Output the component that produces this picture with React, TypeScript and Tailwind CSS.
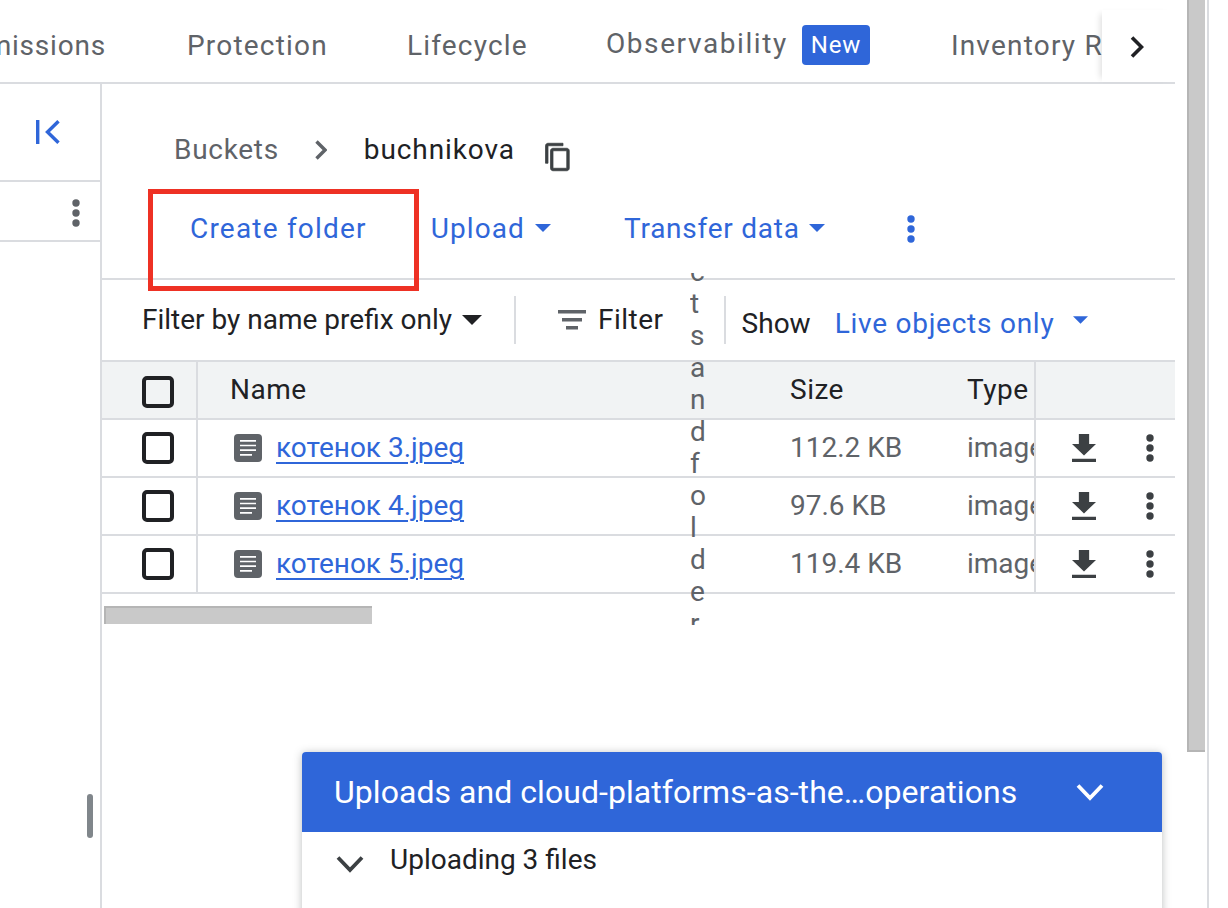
const blue = 'text-[#2f66d9]'

const Caret = ({ className }: { className: string }) => (
  <svg viewBox="0 0 10 5" className={className} fill="currentColor">
    <path d="M0 0h10L5 5z" />
  </svg>
)

const Kebab = ({ className }: { className: string }) => (
  <svg viewBox="0 0 8 28" className={className} fill="currentColor">
    <circle cx="4" cy="4" r="3.7" />
    <circle cx="4" cy="14" r="3.7" />
    <circle cx="4" cy="24" r="3.7" />
  </svg>
)

const Checkbox = () => (
  <div className="w-8 h-8 rounded-[5px] border-4 border-[#202124]" />
)

const DocIcon = () => (
  <svg viewBox="0 0 28 28" className="w-7 h-7 shrink-0">
    <rect width="28" height="28" rx="4" fill="#5f6368" />
    <path d="M6 6.800h16M6 11.500h16M6 16.200h16M6 20.900h12" stroke="#fff" strokeWidth="1.700" />
  </svg>
)

const files = [
  { name: 'котенок 3.jpeg', size: '112.2 KB' },
  { name: 'котенок 4.jpeg', size: '97.6 KB' },
  { name: 'котенок 5.jpeg', size: '119.4 KB' },
]

export default function App() {
  return (
    <div className="relative w-[1228px] h-[908px] overflow-hidden bg-white flex font-['Roboto',sans-serif] text-[#202124]">
      <div className="w-[1175px] shrink-0 flex flex-col">
        {/* tabs */}
        <div className="h-[84px] shrink-0 border-b-2 border-[#dadce0] flex items-center text-[28px] tracking-[1.2px] text-[#5f6368] whitespace-nowrap overflow-hidden">
          <div className="w-[106px] shrink-0 overflow-hidden flex justify-end pt-[10px] tracking-[0.8px]">
            <span>Permissions</span>
          </div>
          <span className="ml-[81px] pt-[10px]">Protection</span>
          <span className="ml-[79px] pt-[10px]">Lifecycle</span>
          <span className="ml-[78px] pt-[6px] tracking-[1.6px]">Observability</span>
          <span className="ml-[14px] mt-[8px] w-[68px] h-[40px] shrink-0 rounded-[4px] bg-[#2f66d9] text-white text-[24px] tracking-[0.8px] flex items-center justify-center">
            New
          </span>
          <span className="ml-[81px] pt-[10px]">Inventory Reports</span>
        </div>

        <div className="flex-1 flex min-h-0">
          {/* collapsed sidebar */}
          <div className="w-[102px] shrink-0 border-r-2 border-[#dadce0] flex flex-col">
            <div className="h-[98px] shrink-0 border-b-2 border-[#dadce0] flex justify-end pr-[40px] pt-[36px]">
              <svg viewBox="0 0 24 24" className={`w-6 h-6 ${blue}`} fill="none" stroke="currentColor" strokeWidth="3.400">
                <path d="M1.700 0v24M22.500 1.200 11.500 12l11 10.800" />
              </svg>
            </div>
            <div className="h-[60px] shrink-0 border-b-2 border-[#dadce0] flex items-center justify-end pr-[20px] pt-[4px]">
              <Kebab className="w-2 h-7 text-[#5f6368]" />
            </div>
          </div>

          {/* main */}
          <div className="flex-1 min-w-0 flex flex-col">
            <div className="h-[196px] shrink-0 border-b-2 border-[#dadce0]">
              <div className="h-[44px] mt-[44px] pl-[72px] flex items-center text-[28px] tracking-[0.7px]">
                <span className="text-[#5f6368]">Buckets</span>
                <svg viewBox="0 0 12 20" className="w-3 h-5 ml-[36px] text-[#5f6368]" fill="none" stroke="currentColor" strokeWidth="3.400">
                  <path d="M1.500 1.500 10 10l-8.500 8.500" />
                </svg>
                <span className="ml-[37px] tracking-[0.9px]">buchnikova</span>
                <svg viewBox="0 0 24 24" className="w-[30px] h-[30px] ml-[28px] mt-[14px] text-[#3c4043]" fill="currentColor" stroke="currentColor" strokeWidth="0.600">
                  <path d="M16 1H4c-1.100 0-2 .9-2 2v14h2V3h12V1zm3 4H8c-1.100 0-2 .9-2 2v14c0 1.100.9 2 2 2h11c1.100 0 2-.9 2-2V7c0-1.100-.9-2-2-2zm0 16H8V7h11v14z" />
                </svg>
              </div>
              <div className={`h-[44px] mt-[34px] flex items-center text-[28px] pt-[2px] ${blue}`}>
                <span className="ml-[88px] tracking-[1.2px]">Create folder</span>
                <span className="ml-[64px] tracking-[1.100px]">Upload</span>
                <Caret className="w-[16px] h-2 ml-[10px] -mt-[2px]" />
                <span className="ml-[73px] tracking-[0.75px]">Transfer data</span>
                <Caret className="w-[16px] h-2 ml-[9px] -mt-[2px]" />
                <Kebab className="w-2 h-8 ml-[82px]" />
              </div>
            </div>

            {/* filter row */}
            <div className="h-[80px] shrink-0 flex items-center text-[28px]">
              <span className="ml-[40px]">Filter by name prefix only</span>
              <Caret className="w-5 h-[10px] ml-[10px]" />
              <div className="w-[2px] h-12 ml-[32px] bg-[#dadce0]" />
              <svg viewBox="0 0 28 20" className="w-7 h-5 ml-[42px] text-[#5f6368]" fill="currentColor">
                <path d="M0 0h28v3.500H0zM4 8h20v3.500H4zM8 16h12v3.500H8z" />
              </svg>
              <span className="ml-[12px] tracking-[0.5px]">Filter</span>
              <div className="w-[2px] h-12 ml-[60px] bg-[#dadce0]" />
              <span className="ml-[16px] pt-[8px]">Show</span>
              <span className={`ml-[24px] pt-[8px] tracking-[0.75px] ${blue}`}>Live objects only</span>
              <Caret className={`w-[15px] h-2 ml-[19px] ${blue}`} />
            </div>

            {/* table */}
            <div className="border-t-2 border-[#dadce0] text-[28px]">
              <div className="h-[58px] flex items-stretch bg-[#f1f3f4] border-b-2 border-[#dadce0]">
                <div className="w-[96px] shrink-0 border-r-2 border-[#dadce0] flex items-center pl-[40px] pt-[4px]">
                  <Checkbox />
                </div>
                <div className="w-[592px] shrink-0 flex items-center pl-[32px] tracking-[0.5px]">Name</div>
                <div className="w-[176px] shrink-0 flex items-center tracking-[0.5px]">Size</div>
                <div className="w-[70px] shrink-0 flex items-center pl-[1px] border-r-2 border-[#dadce0] overflow-hidden tracking-[0.5px]">Type</div>
              </div>
              {files.map((file) => (
                <div key={file.name} className="h-[58px] flex items-stretch border-b-2 border-[#dadce0]">
                  <div className="w-[96px] shrink-0 border-r-2 border-[#dadce0] flex items-center pl-[40px]">
                    <Checkbox />
                  </div>
                  <div className="w-[592px] shrink-0 flex items-center pl-[36px]">
                    <DocIcon />
                    <a className={`ml-[14px] underline decoration-2 underline-offset-[5px] ${blue}`}>{file.name}</a>
                  </div>
                  <div className="w-[176px] shrink-0 flex items-center text-[#5f6368]">{file.size}</div>
                  <div className="w-[70px] shrink-0 flex items-center pl-[1px] border-r-2 border-[#dadce0] overflow-hidden text-[#5f6368]">image/jpeg</div>
                  <div className="flex-1 flex items-center text-[#3c4043]">
                    <svg viewBox="5 3 14 17" className="w-[24px] h-[28px] ml-[36px]" fill="currentColor" preserveAspectRatio="none">
                      <path d="M19 9h-4V3H9v6H5l7 7 7-7zM5 18v2h14v-2H5z" />
                    </svg>
                    <Kebab className="w-2 h-7 ml-[50px]" />
                  </div>
                </div>
              ))}
            </div>

            {/* table scrollbar */}
            <div className="w-[268px] h-[18px] ml-[2px] mt-[12px] bg-[#c9c9c9] border-t-2 border-l-2 border-[#b5b5b5]" />
          </div>
        </div>
      </div>

      {/* page scrollbar */}
      <div className="ml-[12px] w-[18px] h-[752px] bg-[#c9c9c9] border-l-2 border-b-2 border-[#b5b5b5]" />
      <div className="ml-[2px] w-[2px] bg-[#dadce0]" />

      {/* fade behind the tab arrow */}
      <div className="absolute left-[1102px] top-[10px] w-[74px] h-[72px] bg-white shadow-[-6px_0_6px_-4px_rgba(0,0,0,0.12)] flex items-center pl-[28px] pt-[2px]">
        <svg viewBox="0 0 14 22" className="w-[14px] h-[22px] text-[#202124]" fill="none" stroke="currentColor" strokeWidth="3.600">
          <path d="M2 1.500 11.500 11 2 20.500" />
        </svg>
      </div>

      {/* red annotation */}
      <div className="absolute left-[148px] top-[189px] w-[271px] h-[102px] border-[5px] border-[#ee3124]" />

      {/* squeezed header text */}
      <div className="absolute left-[690px] top-[273px] w-[16px] h-[352px] overflow-hidden text-[28px] leading-[32px] text-[#5f6368]">
        <div className="-mt-[17px] break-all">cts and folder</div>
      </div>

      {/* sidebar scroll thumb */}
      <div className="absolute left-[87px] top-[794px] w-[6px] h-[44px] rounded-full bg-[#80868b]" />

      {/* upload panel */}
      <div className="absolute left-[302px] top-[752px] w-[860px] h-[170px] rounded-t-[4px] bg-white shadow-[0_1px_8px_rgba(60,64,67,0.35)] overflow-hidden">
        <div className="h-[80px] bg-[#2f66d9] text-white flex items-center pl-[32px] text-[32px] tracking-[0.05px]">
          <span className="whitespace-nowrap">Uploads and cloud-platforms-as-the…operations</span>
        </div>
        <div className="flex items-center h-[56px] text-[28px]">
          <span className="ml-[88px]">Uploading 3 files</span>
        </div>
        <svg viewBox="0 0 28 18" className="absolute left-[34px] top-[103px] w-7 h-[18px] text-[#3c4043]" fill="none" stroke="currentColor" strokeWidth="3.800">
          <path d="M2 2.500 14 15 26 2.500" />
        </svg>
        <svg viewBox="0 0 28 18" className="absolute left-[774px] top-[31px] w-7 h-[18px] text-white" fill="none" stroke="currentColor" strokeWidth="3.800">
          <path d="M2 2.500 14 15 26 2.500" />
        </svg>
      </div>
    </div>
  )
}
